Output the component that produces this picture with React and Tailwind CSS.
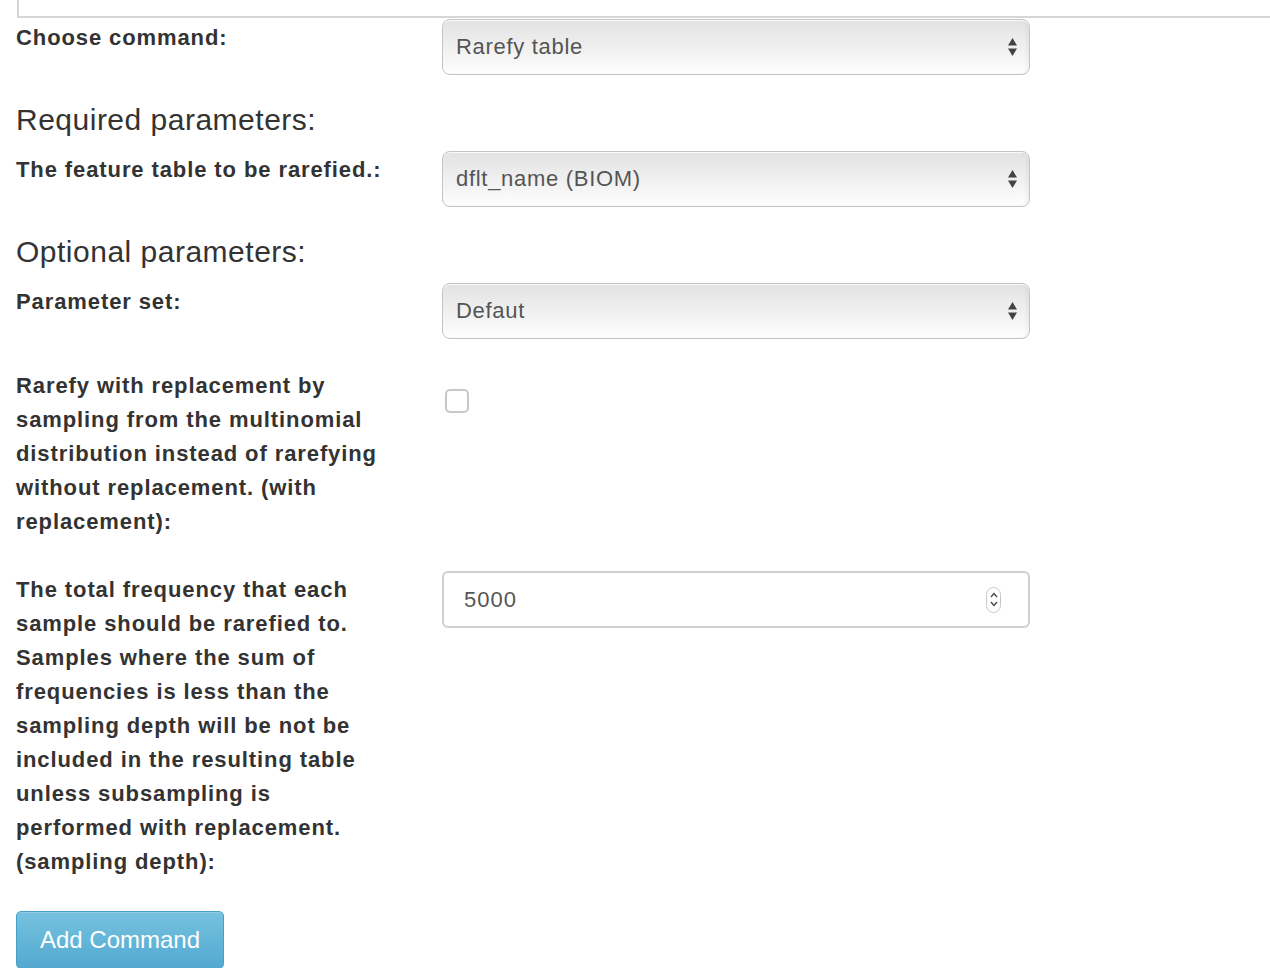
import React from 'react';

const font = { fontFamily: '"Liberation Sans", Arial, Helvetica, sans-serif' };

function SelectBox({ value }) {
  return (
    <div className="relative w-[588px] h-[56px] rounded-[8px] border border-[#c4c4c4] bg-gradient-to-b from-[#e2e2e2] via-[#f0f0f0] to-[#fefefe] shadow-[inset_0_1px_1px_rgba(255,255,255,0.9),inset_-3px_0_3px_rgba(0,0,0,0.04)] flex items-center pl-[13px] pb-[1px]">
      <span className="text-[22px] tracking-[0.7px] text-[#555]">{value}</span>
      <svg className="absolute right-[11px] top-1/2 -translate-y-1/2" width="11" height="24" viewBox="0 0 11 24">
        <polygon points="5.5,3 10,10.5 1,10.5" fill="#444" />
        <polygon points="1,13.5 10,13.5 5.5,21" fill="#444" />
      </svg>
    </div>
  );
}

function Row({ label, children, className = '' }) {
  return (
    <div className={`flex ${className}`}>
      <label className="w-[426px] pr-[50px] pt-[2px] text-[22px] leading-[34px] tracking-[0.9px] font-bold text-[#333]">{label}</label>
      <div>{children}</div>
    </div>
  );
}

export default function App() {
  return (
    <div className="bg-white min-h-[968px] w-[1270px] overflow-hidden" style={font}>
      <div className="ml-[17px] h-[18px] border-l-2 border-b-2 border-[#d6d6d6]" />
      <div className="pl-[16px]">
        <Row label="Choose command:" className="mt-[1px]">
          <SelectBox value="Rarefy table" />
        </Row>

        <h3 className="mt-[25px] mb-[11px] text-[30px] leading-[40px] tracking-[0.5px] text-[#333] font-normal">Required parameters:</h3>

        <Row label="The feature table to be rarefied.:">
          <SelectBox value="dflt_name (BIOM)" />
        </Row>

        <h3 className="mt-[25px] mb-[11px] text-[30px] leading-[40px] tracking-[0.5px] text-[#333] font-normal">Optional parameters:</h3>

        <Row label="Parameter set:">
          <SelectBox value="Defaut" />
        </Row>

        <Row
          className="mt-[28px]"
          label="Rarefy with replacement by sampling from the multinomial distribution instead of rarefying without replacement. (with replacement):"
        >
          <div className="mt-[22px] ml-[3px] w-[24px] h-[24px] rounded-[5px] border-2 border-[#c8c8c8] bg-white" />
        </Row>

        <Row
          className="mt-[32px]"
          label="The total frequency that each sample should be rarefied to. Samples where the sum of frequencies is less than the sampling depth will be not be included in the resulting table unless subsampling is performed with replacement. (sampling depth):"
        >
          <div className="relative w-[588px] h-[57px] rounded-[6px] border-2 border-[#cfcfcf] bg-white flex items-center pl-[20px]">
            <span className="text-[22px] tracking-[1px] text-[#555]">5000</span>
            <div className="absolute right-[27px] top-1/2 -translate-y-1/2 w-[15px] h-[26px] rounded-full border border-[#c8c8c8] flex flex-col items-center justify-center gap-[3px]">
              <svg width="8" height="6" viewBox="0 0 8 6"><polyline points="1,5 4,1.5 7,5" fill="none" stroke="#444" strokeWidth="1.3" /></svg>
              <svg width="8" height="6" viewBox="0 0 8 6"><polyline points="1,1 4,4.5 7,1" fill="none" stroke="#444" strokeWidth="1.3" /></svg>
            </div>
          </div>
        </Row>

        <button className="mt-[32px] w-[208px] h-[58px] rounded-[5px] border border-[#46a0c8] bg-gradient-to-b from-[#76c2df] to-[#52a9d1] text-white text-[24px] shadow-[inset_0_1px_0_rgba(255,255,255,0.2)]">
          Add Command
        </button>
      </div>
    </div>
  );
}
